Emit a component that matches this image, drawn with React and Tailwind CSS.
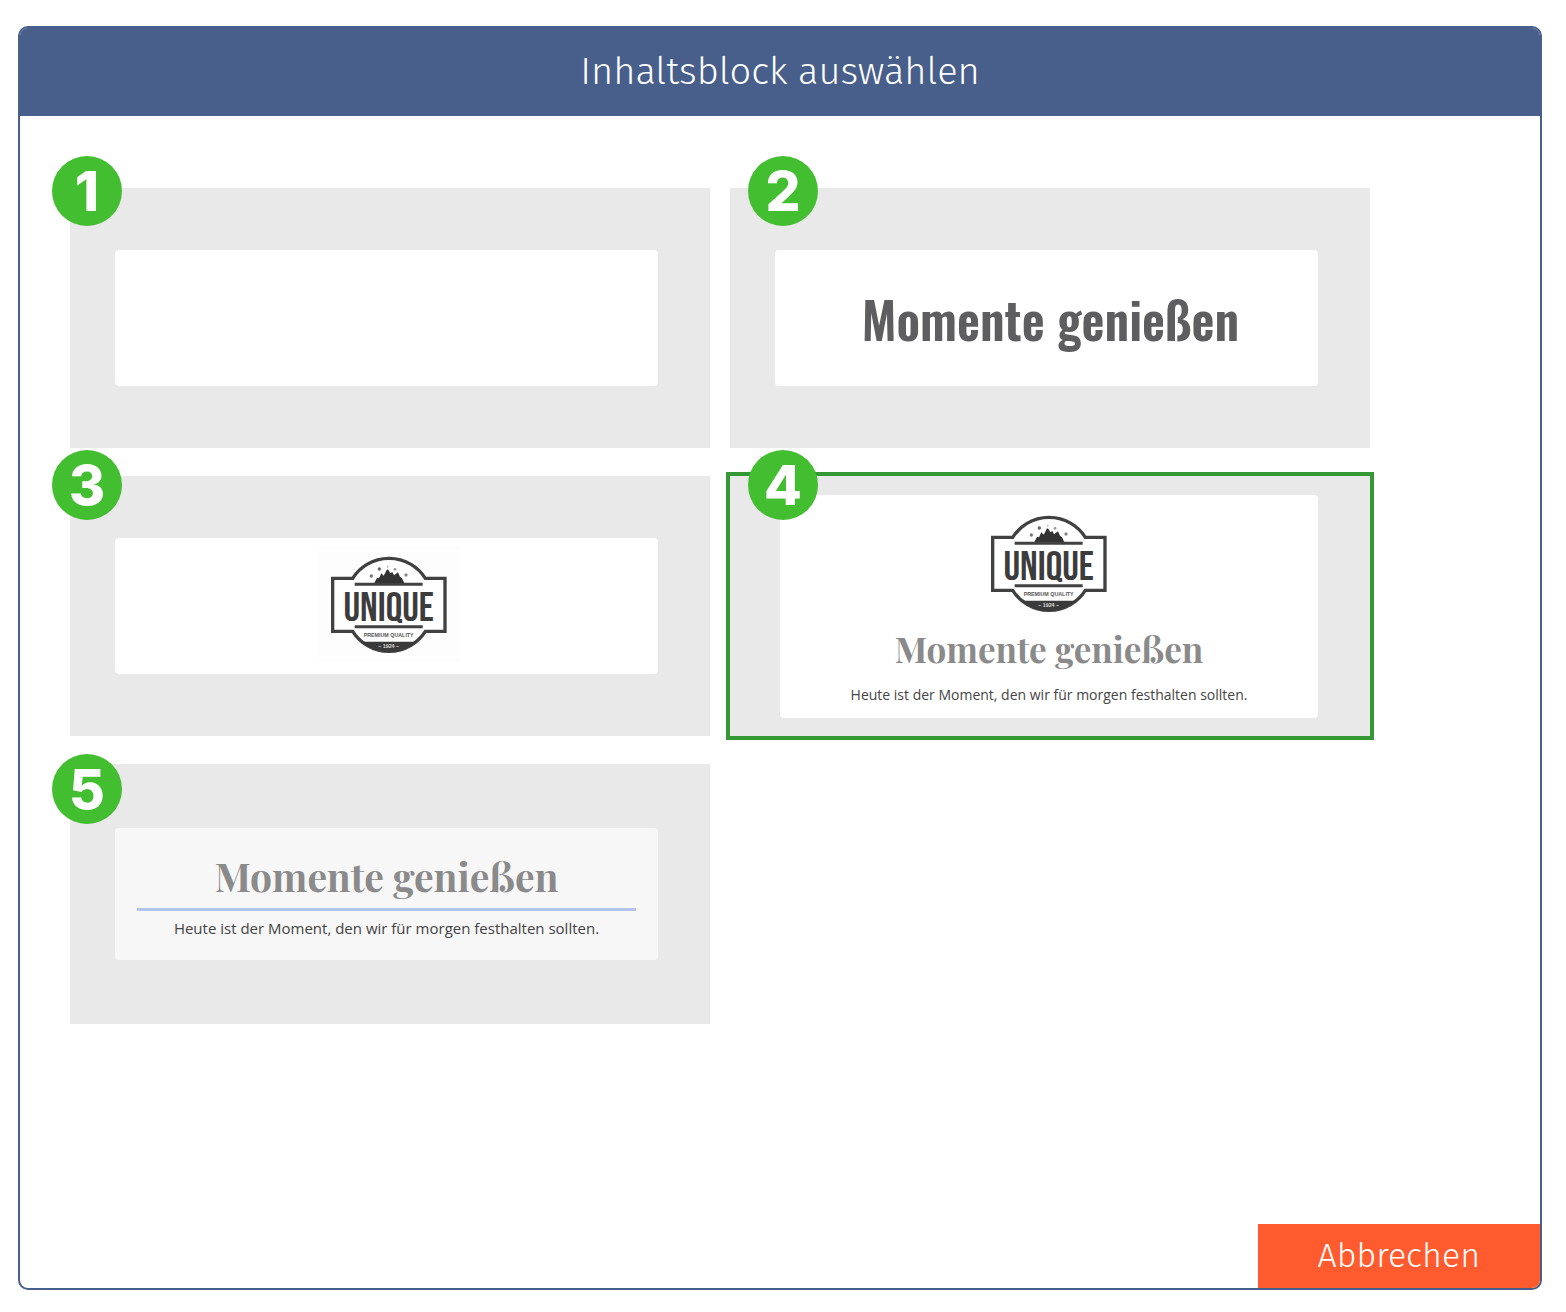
import React, { useState } from "react";
import clsx from "clsx";

const BLOCKS = [
  { id: 1, label: "Leerer Block", preview: "empty", badge: "-top-8 -left-[18px]" },
  { id: 2, label: "Titel", preview: "title", badge: "-top-8 left-[18px]" },
  { id: 3, label: "Logo", preview: "logo", badge: "-top-[26px] -left-[18px]" },
  { id: 4, label: "Logo mit Titel und Text", preview: "logoText", badge: "-top-[26px] left-[18px]" },
  { id: 5, label: "Titel mit Text", preview: "titleText", badge: "-top-[10px] -left-[18px]" }
];

const HEADLINE = "Momente genießen";
const SUBLINE = "Heute ist der Moment, den wir für morgen festhalten sollten.";

export default function App() {
  const [selected, setSelected] = useState(4);

  return (
    <main className="flex min-h-screen flex-col bg-white pt-[26px] pr-6 pb-[22px] pl-[18px]">
      <section
        role="dialog"
        aria-labelledby="dialog-title"
        className="flex flex-1 flex-col overflow-hidden rounded-[10px] border-2 border-[#485f8b] bg-white"
      >
        <header className="flex h-[88px] items-center justify-center bg-[#485f8b] pb-0.5">
          <h1
            id="dialog-title"
            className="font-['Fira_Sans','Open_Sans',sans-serif] text-[38px] leading-[48px] font-light text-white"
          >
            Inhaltsblock auswählen
          </h1>
        </header>

        <div className="grid flex-1 content-start grid-cols-[repeat(auto-fill,640px)] gap-x-5 gap-y-7 px-[50px] pt-[72px] pb-10">
          {BLOCKS.map((block) => (
            <BlockTile
              key={block.id}
              block={block}
              active={selected === block.id}
              onSelect={() => setSelected(block.id)}
            />
          ))}
        </div>

        <footer className="flex justify-end">
          <button
            type="button"
            className="h-16 bg-[#ff5b2e] px-[60px] font-['Fira_Sans','Open_Sans',sans-serif] text-[34px] leading-[48px] font-light text-white"
          >
            Abbrechen
          </button>
        </footer>
      </section>
    </main>
  );
}

function BlockTile({ block, active, onSelect }) {
  return (
    <div className="relative h-[260px]">
      <button
        type="button"
        aria-label={block.label}
        aria-pressed={active}
        onClick={onSelect}
        className={clsx(
          "flex size-full bg-[#e9e9e9]",
          block.preview === "logoText" && "pt-[19px] pr-[52px] pb-[18px] pl-[50px]",
          block.preview === "titleText" && "pt-16 pr-[52px] pb-16 pl-[45px]",
          !["logoText", "titleText"].includes(block.preview) && "py-[62px] pr-[52px] pl-[45px]",
          active && "outline-4 outline-[#349934]"
        )}
      >
        <Preview type={block.preview} />
      </button>
      <span
        className={clsx(
          "pointer-events-none absolute flex size-[70px] items-center justify-center rounded-full bg-[#43be31] font-['Inter',sans-serif] text-[55px] leading-[70px] font-extrabold text-white",
          block.badge
        )}
      >
        {block.id}
      </span>
    </div>
  );
}

function Preview({ type }) {
  if (type === "title") {
    return (
      <span className="flex flex-1 items-center justify-center self-stretch rounded-sm bg-white pl-2 font-['Oswald','Roboto',sans-serif] text-[50px] leading-[60px] font-semibold text-[#5e5e60]">
        {HEADLINE}
      </span>
    );
  }

  if (type === "logo") {
    return (
      <span className="flex flex-1 items-start justify-center self-stretch rounded-sm bg-white pt-2 pl-1">
        <span className="flex h-[116px] w-[142px] items-center justify-center bg-[#fdfdfd]">
          <UniqueLogo />
        </span>
      </span>
    );
  }

  if (type === "logoText") {
    return (
      <span className="flex flex-1 flex-col items-center self-stretch rounded-sm bg-white pt-[18px]">
        <UniqueLogo />
        <span className="mt-[14px] font-['Playfair_Display','Liberation_Serif',serif] text-[35px] leading-[44px] font-bold text-[#8a8a8a]">
          {HEADLINE}
        </span>
        <span className="mt-[14px] font-['Open_Sans',sans-serif] text-[14px] leading-5 text-[#444444]">
          {SUBLINE}
        </span>
      </span>
    );
  }

  if (type === "titleText") {
    return (
      <span className="flex flex-1 flex-col items-center self-stretch rounded-sm bg-[#f7f7f7] px-[22px] pt-[26px]">
        <span className="font-['Playfair_Display','Liberation_Serif',serif] text-[39px] leading-[44px] font-bold text-[#8a8a8a]">
          {HEADLINE}
        </span>
        <span className="mt-[10px] h-[3px] w-full bg-[#b3c5ec]" />
        <span className="mt-[7px] font-['Open_Sans',sans-serif] text-[15px] leading-5 text-[#444444]">
          {SUBLINE}
        </span>
      </span>
    );
  }

  return <span className="flex-1 self-stretch rounded-sm bg-white" />;
}

function UniqueLogo() {
  return (
    <svg viewBox="60 40 360 300" className="h-[100px] w-[120px] shrink-0" aria-hidden="true">
      <path
        d="M71 113H131A129 129 0 0 1 349 113H408V272H349A129 129 0 0 1 131 272H71Z"
        fill="#fff"
        stroke="#414141"
        strokeWidth="10"
      />
      <path d="M156 303H323A129 129 0 0 1 156 303Z" fill="#3a3a3a" />
      {/* mountains and the stars above them */}
      <path
        d="M195 129L204 111L210 113L217 98L224 105L230 94L234 86L239 89L244 98L250 94L255 104L267 95L273 108L279 113L287 129Z"
        fill="#333"
      />
      <circle cx="187" cy="106" r="5" fill="#777" />
      <circle cx="211" cy="85" r="5" fill="#666" />
      <circle cx="236" cy="78" r="3" fill="#bbb" />
      <circle cx="258" cy="86" r="4" fill="#999" />
      <circle cx="291" cy="103" r="5" fill="#888" />
      <path d="M137 131H341M137 258H341" stroke="#414141" strokeWidth="9" />
      <text
        x="239"
        y="241"
        textAnchor="middle"
        fill="#3c3c3c"
        className="font-['Bebas_Neue','Oswald',sans-serif] text-[124px] font-normal"
      >
        UNIQUE
      </text>
      <text
        x="239"
        y="289"
        textAnchor="middle"
        fill="#555"
        className="font-['Liberation_Sans',sans-serif] text-[16px] font-bold"
      >
        PREMIUM QUALITY
      </text>
      <text
        x="239"
        y="323"
        textAnchor="middle"
        fill="#ddd"
        className="font-['Liberation_Sans',sans-serif] text-[16px] font-bold"
      >
        – 1924 –
      </text>
    </svg>
  );
}
